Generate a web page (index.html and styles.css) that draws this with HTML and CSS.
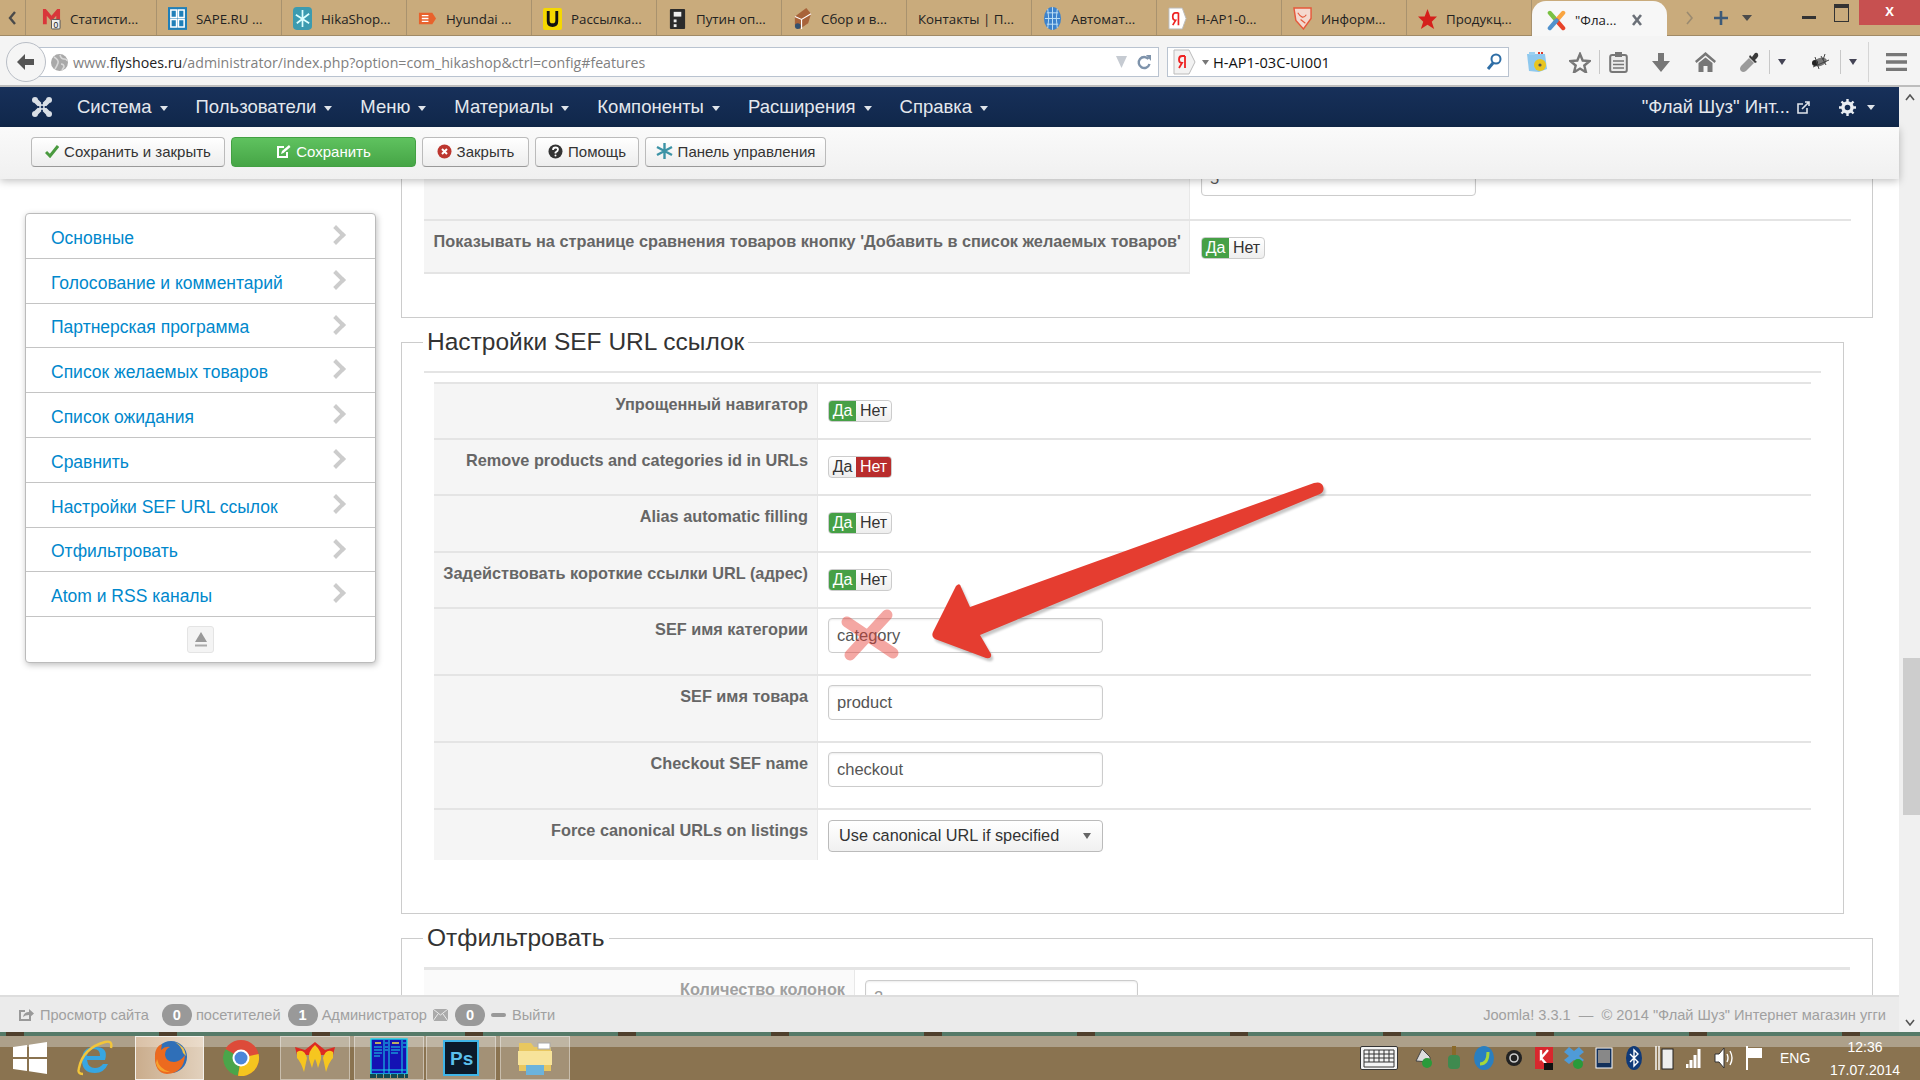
FILE: index.html
```html
<!DOCTYPE html>
<html lang="ru">
<head>
  <meta charset="UTF-8" />
  <title>Настройки HikaShop - Панель управления</title>
  <link rel="stylesheet" href="styles.css">
</head>
<body>
  <div class="tabstrip">
    <div class="tab-scroll">
      <svg width="9" height="14" viewBox="0 0 9 14"><path d="M7 1 2 7l5 6" fill="none" stroke="#4a4a4a" stroke-width="2.4"/></svg>
    </div>
    <div class="tab tab-first">
      <svg class="fav" viewBox="0 0 20 24"><path d="M1 2h3l6 7 6-7h3v14h-4V9l-5 6-5-6v9H1z" fill="#d9363a"/><rect x="10" y="13" width="9" height="10" rx="1" fill="#eee" stroke="#555"/><text x="12" y="22" class="fav-text">0</text></svg>
      <span>Статисти...</span>
    </div>
    <div class="tab">
      <svg class="fav" viewBox="0 0 20 24"><rect width="20" height="24" fill="#1f7fb8"/><path d="M3 3h6v8H3zM11 3h6v8h-6zM3 13h6v8H3zM11 13h6v8h-6z" fill="none" stroke="#fff" stroke-width="1.6"/></svg>
      <span>SAPE.RU ...</span>
    </div>
    <div class="tab">
      <svg class="fav" viewBox="0 0 20 24"><rect width="20" height="24" rx="4" fill="#3c9bb0"/><path d="M10 3v18M3 8l14 9M17 7 4 17" stroke="#dff" stroke-width="1.8"/></svg>
      <span>HikaShop...</span>
    </div>
    <div class="tab">
      <svg class="fav" viewBox="0 0 20 24"><path d="M1 6h14l4 6-4 6H1z" fill="#e8622c"/><path d="M4 9h7M4 12h7M4 15h7" stroke="#fff" stroke-width="1.4"/></svg>
      <span>Hyundai ...</span>
    </div>
    <div class="tab">
      <svg class="fav" viewBox="0 0 20 24"><rect y="1" width="20" height="23" rx="2" fill="#f5d800"/><path d="M4 4h3v10q0 3 3 3t3-3V4h3v11q0 6-6 6t-6-6z" fill="#111"/></svg>
      <span>Рассылка...</span>
    </div>
    <div class="tab">
      <svg class="fav" viewBox="0 0 20 24"><rect x="2" y="2" width="16" height="21" rx="1" fill="#2b2b2b"/><rect x="6" y="5" width="8" height="5" fill="#eee"/><rect x="6" y="13" width="3" height="3" fill="#eee"/><rect x="6" y="18" width="3" height="3" fill="#eee"/></svg>
      <span>Путин оп...</span>
    </div>
    <div class="tab">
      <svg class="fav" viewBox="0 0 20 24"><path d="M2 10 14 1l5 6-3 10-9 6-5-5z" fill="#a8633a"/><path d="M2 10l7 3 10-6M9 13v10" fill="none" stroke="#fff" stroke-width="1.2"/><circle cx="5" cy="20" r="3" fill="#33506e"/></svg>
      <span>Сбор и в...</span>
    </div>
    <div class="tab"><span>Контакты | П...</span></div>
    <div class="tab">
      <svg class="fav" viewBox="0 0 20 24"><ellipse cx="10" cy="12" rx="9" ry="12" fill="#3c82cc"/><path d="M4 6h12M2 12h16M4 18h12M10 0v24M5 2q2 10 0 20M15 2q-2 10 0 20" fill="none" stroke="#bfe0f7" stroke-width="1"/></svg>
      <span>Автомат...</span>
    </div>
    <div class="tab">
      <svg class="fav" viewBox="0 0 20 24"><path d="M1 1h14l4 11-4 11H1z" fill="#fff" stroke="#bbb"/><path d="M11 6H8Q5 6 5 10t3 4l-3 5M11 6v13" fill="none" stroke="#e22" stroke-width="1.8"/></svg>
      <span>Н-АР1-0...</span>
    </div>
    <div class="tab">
      <svg class="fav" viewBox="0 0 20 24"><path d="M1 1h18v11l-8 11-8-9z" fill="#f4d9cf" stroke="#e5583a" stroke-width="1.5"/><path d="M5 6q5 8 9 2M8 13l5 4" fill="none" stroke="#e5583a" stroke-width="1.2"/></svg>
      <span>Информ...</span>
    </div>
    <div class="tab">
      <svg class="fav" viewBox="0 0 20 24"><path d="M10 2l3 8h7l-5.500 5.500L17 23l-7-4.500L3 23l2.500-7.500L0 10h7z" fill="#d5201c"/></svg>
      <span>Продукц...</span>
    </div>
    <div class="tab-active">
      <svg class="fav" viewBox="0 0 20 24"><path d="M3 4l7 8" stroke="#7ac143" stroke-width="4.500" stroke-linecap="round"/><path d="M17 4l-7 8" stroke="#f9a541" stroke-width="4.500" stroke-linecap="round"/><path d="M17 20l-7-8" stroke="#e8432a" stroke-width="4.500" stroke-linecap="round"/><path d="M3 20l7-8" stroke="#5091cd" stroke-width="4.500" stroke-linecap="round"/></svg>
      <span>"Фла...</span>
      <svg class="tab-close" width="10" height="12" viewBox="0 0 10 12"><path d="M1 1l8 10M9 1 1 11" stroke="#6b7078" stroke-width="2.600"/></svg>
    </div>
    <div class="tab-extras">
      <svg width="8" height="14" viewBox="0 0 8 14"><path d="M1 1l5 6-5 6" fill="none" stroke="#9a8a70" stroke-width="1.600"/></svg>
      <svg width="14" height="14" viewBox="0 0 14 14"><path d="M7 0v14M0 7h14" stroke="#3d5a78" stroke-width="2.600"/></svg>
      <svg class="tabs-menu" width="10" height="6" viewBox="0 0 10 6"><path d="M0 0h10L5 6z" fill="#4b4b4b"/></svg>
    </div>
    <div class="window-controls">
      <span class="win-min"></span>
      <span class="win-max"></span>
      <span class="win-close">X</span>
    </div>
  </div>

  <div class="navbar">
    <div class="back-button">
      <svg width="18" height="16" viewBox="0 0 18 16"><path d="M8 0 0 8l8 8V11h9V5H8z" fill="#555"/></svg>
    </div>
    <div class="urlbar">
      <svg width="17" height="17" viewBox="0 0 17 17"><circle cx="8.500" cy="8.500" r="8.500" fill="#a9a9a9"/><path d="M3 3q5 3 4 6t-3 6M9 1q1 4 4 4t3 2M10 10q3 0 3 3l-2 3" fill="none" stroke="#d8d8d8" stroke-width="1.600"/></svg>
      <div class="url-text"><span class="url-dim">www.</span><span class="url-host">flyshoes.ru</span><span class="url-dim">/administrator/index.php?option=com_hikashop&amp;ctrl=config#features</span></div>
      <svg width="11" height="12" viewBox="0 0 11 12"><path d="M0 0h11L5.500 12z" fill="#c6cbd2"/></svg>
      <svg class="url-reload" width="14" height="16" viewBox="0 0 14 16"><path d="M11.500 5A5.500 5.500 0 1 0 12.500 10" fill="none" stroke="#7e93ab" stroke-width="2.400"/><path d="M9 1h5v6z" fill="#7e93ab"/></svg>
    </div>
    <div class="searchbar">
      <svg width="24" height="26" viewBox="0 0 24 26"><path d="M1 1h15l6 12-6 12H1z" fill="#f2f2f2" stroke="#bbb"/><path d="M12 7H9Q6 7 6 10.500T9 14l-3 5M12 7v12" fill="none" stroke="#e22" stroke-width="1.800"/></svg>
      <svg width="7" height="5" viewBox="0 0 7 5"><path d="M0 0h7L3.500 5z" fill="#777"/></svg>
      <div class="search-text">H-AP1-03C-UI001</div>
      <svg width="16" height="18" viewBox="0 0 16 18"><circle cx="10" cy="6" r="4.500" fill="none" stroke="#2e6ea6" stroke-width="2"/><path d="M7 10 2 16" stroke="#2e6ea6" stroke-width="3"/></svg>
    </div>
    <div class="nav-icons">
      <svg class="nav-sync" width="22" height="22" viewBox="0 0 22 22"><path d="M1 3h18l2 15-8 3-10-1z" fill="#8ec8ee"/><path d="M3 1h6v3H3z" fill="#9bd0f0"/><path d="M12 1h2v2h-2zM15 1h2v2h-2z" fill="#d8392b"/><circle cx="14" cy="14" r="6" fill="#e8c520"/><circle cx="14" cy="14" r="1.600" fill="#555"/></svg>
      <svg class="nav-star" width="22" height="21" viewBox="0 0 22 21"><path d="M11 2l2.700 6.500 7 .5-5.400 4.500 1.700 6.800-6-3.700-6 3.700 1.700-6.800L1.300 9l7-.5z" fill="#f6f6f6" stroke="#777" stroke-width="2.400"/></svg>
      <span class="nav-split-star"></span>
      <svg class="nav-clip" width="19" height="22" viewBox="0 0 19 22"><rect x="1.200" y="4" width="16.600" height="17" rx="2" fill="#ececec" stroke="#777" stroke-width="2"/><rect x="6" y="1" width="7" height="5" fill="#777"/><path d="M4 10h11M4 13.500h11M4 17h11" stroke="#777" stroke-width="1.600"/></svg>
      <svg class="nav-down" width="20" height="19" viewBox="0 0 20 19"><path d="M7 0h6v8h6l-9 11L1 8h6z" fill="#777"/></svg>
      <svg class="nav-home" width="21" height="20" viewBox="0 0 21 20"><path d="M10.500 0 0 9l1.500 2 9-7.500 9 7.500L21 9zM10.500 5.500 3.500 11v9h5v-6h4v6h5v-9z" fill="#777"/></svg>
      <svg class="nav-mic" width="20" height="20" viewBox="0 0 20 20"><path d="M1 19q-2-2 0-5l8-8 5 5-8 8q-3 2-5 0z" fill="#9a9a9a"/><path d="M10 3l7 7-2 1-6-6zM12 5l3-4q2-1 3 1t-1 4l-2 2z" fill="#3a3a3a"/></svg>
      <span class="nav-split"></span>
      <svg class="nav-caret" width="8" height="6" viewBox="0 0 8 6"><path d="M0 0h8L4 6z" fill="#445"/></svg>
      <svg class="nav-bug" width="20" height="18" viewBox="0 0 20 18"><ellipse cx="9" cy="9" rx="7" ry="4" transform="rotate(-20 9 9)" fill="#777"/><circle cx="4" cy="10" r="3" fill="#222"/><path d="M4 4l4 12M2 14l16-7M10 3l5 9M14 1l-2 6" stroke="#444" stroke-width="1"/></svg>
      <span class="nav-split"></span>
      <svg class="nav-caret" width="8" height="6" viewBox="0 0 8 6"><path d="M0 0h8L4 6z" fill="#445"/></svg>
      <span class="nav-rule"></span>
      <svg class="nav-menu" width="21" height="18" viewBox="0 0 21 18"><path d="M0 1.500h21M0 9h21M0 16.500h21" stroke="#777" stroke-width="3.400"/></svg>
    </div>
  </div>

  <div class="window">
    <div class="admin">
      <div class="topmenu">
        <svg class="joomla" width="22" height="22" viewBox="0 0 22 22"><path d="M5 5l12 12M17 5 5 17" stroke="#d9dfe6" stroke-width="5"/><circle cx="4" cy="4" r="3" fill="#d9dfe6"/><circle cx="18" cy="4" r="3" fill="#d9dfe6"/><circle cx="4" cy="18" r="3" fill="#d9dfe6"/><circle cx="18" cy="18" r="3" fill="#d9dfe6"/><path d="M11 6.500v1.800M11 13.700v1.800M6.500 11h1.800M13.700 11h1.800" stroke="#17305a" stroke-width="1.800"/><circle cx="11" cy="11" r="1.300" fill="#17305a"/></svg>
        <a class="menu-item">Система</a>
        <a class="menu-item">Пользователи</a>
        <a class="menu-item">Меню</a>
        <a class="menu-item">Материалы</a>
        <a class="menu-item">Компоненты</a>
        <a class="menu-item">Расширения</a>
        <a class="menu-item">Справка</a>
        <div class="menu-right">
          <span class="site-name">"Флай Шуз" Инт...</span>
          <svg width="13" height="13" viewBox="0 0 13 13"><path d="M10 7v5H1V3h5" fill="none" stroke="#dfe4ea" stroke-width="1.600"/><path d="M5 8l7-7M8 1h4v4" fill="none" stroke="#dfe4ea" stroke-width="1.600"/></svg>
          <svg class="gear" width="17" height="17" viewBox="0 0 17 17"><circle cx="8.500" cy="8.500" r="4.500" fill="none" stroke="#e9edf2" stroke-width="3.400"/><path d="M8.500 0v4M8.500 13v4M0 8.500h4M13 8.500h4M2.500 2.500l3 3M11.500 11.500l3 3M14.500 2.500l-3 3M5.500 11.500l-3 3" stroke="#e9edf2" stroke-width="2.400"/></svg>
          <i class="caret"></i>
        </div>
      </div>

      <div class="toolbar">
        <button class="btn btn-save-close">
          <svg width="14" height="13" viewBox="0 0 14 13"><path d="M1 7l4 4 8-10" fill="none" stroke="#4a9a3f" stroke-width="3"/></svg>
          Сохранить и закрыть
        </button>
        <button class="btn btn-green">
          <svg width="15" height="15" viewBox="0 0 15 15"><path d="M11 8v5H2V3h6" fill="none" stroke="#fff" stroke-width="2"/><path d="M5 10l1-3 7-6 1.500 2-7 6z" fill="#fff"/></svg>
          Сохранить
        </button>
        <button class="btn btn-close">
          <svg width="15" height="15" viewBox="0 0 15 15"><circle cx="7.500" cy="7.500" r="7" fill="#bd362f"/><path d="M5 5l5 5M10 5l-5 5" stroke="#fff" stroke-width="2"/></svg>
          Закрыть
        </button>
        <button class="btn btn-help">
          <svg width="15" height="15" viewBox="0 0 15 15"><circle cx="7.500" cy="7.500" r="7" fill="#333"/><path d="M5 6q0-2.500 2.500-2.500T10 5.500Q10 7 7.500 8.500v1" fill="none" stroke="#fff" stroke-width="1.800"/><circle cx="7.500" cy="11.500" r="1" fill="#fff"/></svg>
          Помощь
        </button>
        <button class="btn btn-panel">
          <svg width="17" height="18" viewBox="0 0 17 18"><path d="M8.500 1v16M1 5l15 8M16 5 1 13" stroke="#3c93a6" stroke-width="2.400"/></svg>
          Панель управления
        </button>
      </div>

      <div class="main">
        <div class="sidebar">
          <a class="side-link">Основные</a>
          <a class="side-link">Голосование и комментарий</a>
          <a class="side-link">Партнерская программа</a>
          <a class="side-link">Список желаемых товаров</a>
          <a class="side-link">Список ожидания</a>
          <a class="side-link">Сравнить</a>
          <a class="side-link">Настройки SEF URL ссылок</a>
          <a class="side-link">Отфильтровать</a>
          <a class="side-link">Atom и RSS каналы</a>
          <div class="side-foot">
            <span class="side-top">
              <svg width="14" height="16" viewBox="0 0 14 16"><path d="M7 0l6 10H1z" fill="#999"/><path d="M1 13.500h12" stroke="#aaa" stroke-width="2"/></svg>
            </span>
          </div>
        </div>

        <div class="content">
          <div class="panel">
            <div class="cfg-row row-cut">
              <div class="cfg-label wide">Показывать на странице сравнения товаров кнопку 'Добавить в корзину'</div>
              <div class="cfg-value wide"><input class="text-input" value="5"></div>
            </div>
            <div class="cfg-row row-compare">
              <div class="cfg-label wide">Показывать на странице сравнения товаров кнопку 'Добавить в список желаемых товаров'</div>
              <div class="cfg-value wide"><span class="toggle"><b class="yes on">Да</b><b class="no">Нет</b></span></div>
            </div>
          </div>

          <fieldset class="section section-sef">
            <legend>Настройки SEF URL ссылок</legend>
            <div class="legend-rule"></div>
            <div class="cfg-table">
              <div class="cfg-row row-toggle">
                <div class="cfg-label">Упрощенный навигатор</div>
                <div class="cfg-value"><span class="toggle"><b class="yes on">Да</b><b class="no">Нет</b></span></div>
              </div>
              <div class="cfg-row row-toggle">
                <div class="cfg-label">Remove products and categories id in URLs</div>
                <div class="cfg-value"><span class="toggle"><b class="yes">Да</b><b class="no on">Нет</b></span></div>
              </div>
              <div class="cfg-row row-toggle">
                <div class="cfg-label">Alias automatic filling</div>
                <div class="cfg-value"><span class="toggle"><b class="yes on">Да</b><b class="no">Нет</b></span></div>
              </div>
              <div class="cfg-row row-toggle">
                <div class="cfg-label">Задействовать короткие ссылки URL (адрес)</div>
                <div class="cfg-value"><span class="toggle"><b class="yes on">Да</b><b class="no">Нет</b></span></div>
              </div>
              <div class="cfg-row row-input">
                <div class="cfg-label">SEF имя категории</div>
                <div class="cfg-value"><input class="text-input" value="category"></div>
              </div>
              <div class="cfg-row row-input">
                <div class="cfg-label">SEF имя товара</div>
                <div class="cfg-value"><input class="text-input" value="product"></div>
              </div>
              <div class="cfg-row row-input">
                <div class="cfg-label">Checkout SEF name</div>
                <div class="cfg-value"><input class="text-input" value="checkout"></div>
              </div>
              <div class="cfg-row row-select">
                <div class="cfg-label">Force canonical URLs on listings</div>
                <div class="cfg-value">
                  <div class="select-box">Use canonical URL if specified<i class="select-arrow"></i></div>
                </div>
              </div>
            </div>
          </fieldset>

          <fieldset class="section section-filter">
            <legend>Отфильтровать</legend>
            <div class="legend-rule"></div>
            <div class="cfg-row row-columns">
              <div class="cfg-label columns-label">Количество колонок</div>
              <div class="cfg-value columns-value"><input class="text-input" value="2"></div>
            </div>
          </fieldset>
        </div>

        <svg class="markup" width="500" height="200" viewBox="0 0 500 200">
          <path class="arrow" d="M146 126 490 2q7-2 9 3t-3 8L156 154l11 19q1 5-5 4l-51-19q-4-2-2-7l23-46q4-4 5 1z"/>
          <path class="cross" d="M23 141 69 172M63 134 26 174"/>
        </svg>
      </div>

      <div class="statusbar">
        <svg width="15" height="13" viewBox="0 0 15 13"><path d="M11 8v4H1V3h5" fill="none" stroke="#999" stroke-width="2"/><path d="M4 9q1-5 6-5V1l5 4.500L10 10V7q-4 0-6 2z" fill="#999"/></svg>
        <span class="status-text status-view">Просмотр сайта</span>
        <span class="badge">0</span>
        <span class="status-text">посетителей</span>
        <span class="badge badge-admin">1</span>
        <span class="status-text">Администратор</span>
        <svg class="status-mail" width="15" height="12" viewBox="0 0 15 12"><rect width="15" height="12" fill="#aaa"/><path d="M0 0l7.500 6L15 0M0 12l5-7M15 12l-5-7" fill="none" stroke="#eaeaea"/></svg>
        <span class="badge">0</span>
        <span class="status-minus"></span>
        <span class="status-text">Выйти</span>
        <span class="status-right">Joomla! 3.3.1 &nbsp;— &nbsp;© 2014 "Флай Шуз" Интернет магазин угги</span>
      </div>
    </div>

    <div class="scrollbar">
      <svg class="scroll-up" width="10" height="7" viewBox="0 0 10 7"><path d="M1 6l4-5 4 5" fill="none" stroke="#555" stroke-width="1.600"/></svg>
      <div class="scroll-thumb"></div>
      <svg class="scroll-down" width="10" height="7" viewBox="0 0 10 7"><path d="M1 1l4 5 4-5" fill="none" stroke="#555" stroke-width="1.600"/></svg>
    </div>
  </div>

  <div class="taskbar">
    <div class="task-strip"></div>
    <div class="task-row">
      <div class="task-icon task-start">
        <svg width="34" height="34" viewBox="0 0 34 34"><path d="M0 6 14 4v12H0zM16 3.700 34 1v15H16zM0 18h14v12L0 28zM16 18h18v15l-18-2.700z" fill="#fff"/></svg>
      </div>
      <div class="task-icon">
        <svg width="40" height="40" viewBox="0 0 40 40"><path d="M30 22H12q1 8 8 8 5 0 8-4h5q-4 9-13 9-13 0-13-13t13-13q14 0 10 13zM12 18h13q0-7-6-7t-7 7z" fill="#37a6e2"/><path d="M4 30Q8 10 30 4q8-2 6 6M4 30q-2 6 4 6" fill="none" stroke="#f2c53a" stroke-width="2.400"/></svg>
      </div>
      <div class="task-icon task-open task-hot">
        <svg width="38" height="38" viewBox="0 0 38 38"><circle cx="20" cy="18" r="16" fill="#2f6fb8"/><path d="M24 3q10 4 11 14l-3-3q-1-6-8-11z" fill="#f2c14a"/><path d="M4 16Q4 8 11 5l-1 6q4-4 9-3-5 2-5 8 1 7 9 7 6 0 11-7-1 18-18 19Q3 34 4 16z" fill="#ec6a1f"/><path d="M6 20q2 10 13 13-12 1-14-9z" fill="#f7a12c"/></svg>
      </div>
      <div class="task-icon">
        <svg width="38" height="38" viewBox="0 0 38 38"><circle cx="19" cy="19" r="18" fill="#dd4b39"/><path d="M19 19 3.400 10A18 18 0 0 0 16 36.800z" fill="#4aa54a"/><path d="M19 19 36.600 15A18 18 0 0 1 16 36.800z" fill="#f4c51f"/><circle cx="19" cy="19" r="8.500" fill="#fff"/><circle cx="19" cy="19" r="6.500" fill="#4a86d8"/></svg>
      </div>
      <div class="task-icon task-open task-msn">
        <svg width="42" height="34" viewBox="0 0 42 34"><path d="M1 6l10 3 10-8 10 8 10-3-2 8H3z" fill="#dd2a22"/><path d="M3 11q7-4 10 6l-3 14q-3-10-7-14zM39 11q-7-4-10 6l3 14q3-10 7-14zM21 4q7 6 6 14l-3 9q-2-8-3-9-1 1-3 9l-3-9q-1-8 6-14z" fill="#f6c61f"/></svg>
      </div>
      <div class="task-icon task-open">
        <svg width="38" height="40" viewBox="0 0 38 40"><rect x="1" y="1" width="36" height="35" fill="#1411b4" stroke="#19d6e8" stroke-width="1.400"/><path d="M14 2v33M19 2v33M32 2v33M2 32h34" stroke="#19d6e8" stroke-width="1"/><path d="M5 5h6M22 5h7" stroke="#f0e04a" stroke-width="1.400"/><path d="M4 9h8M4 12h8M4 15h8M4 18h6M21 9h9M21 12h9M21 15h7M15 5h3M15 9h3M15 12h3M33 5h3M33 9h3" stroke="#19d6e8" stroke-width="1.200"/><path d="M0 38h38" stroke="#124a50" stroke-width="4" stroke-dasharray="6 1"/></svg>
      </div>
      <div class="task-icon task-open">
        <svg width="36" height="36" viewBox="0 0 36 36"><rect x="1" y="1" width="34" height="34" fill="#0b1a2b" stroke="#3fb5e8" stroke-width="2"/><text x="7" y="25" class="ps-text">Ps</text></svg>
      </div>
      <div class="task-icon task-open task-last">
        <svg width="38" height="38" viewBox="0 0 38 38"><path d="M3 4h12l3 4h17v24H3z" fill="#e9c75f"/><path d="M2 12h34v14H2z" fill="#f7e39a"/><path d="M10 36V26h18v10z" fill="#6bb3dc"/><rect x="22" y="4" width="12" height="6" fill="#fff" stroke="#aaa"/></svg>
      </div>
      <div class="tray">
        <div class="tray-keyboard">
          <svg width="32" height="19" viewBox="0 0 32 19"><path d="M1 1h30v17H1zM1 5h30M1 9h30M1 13h30M6 1v12M11 1v12M16 1v12M21 1v12M26 1v12" fill="none" stroke="#333"/></svg>
        </div>
        <div class="tray-icons">
          <svg width="20" height="22" viewBox="0 0 20 22"><path d="M2 14 8 2l8 8v5z" fill="#ddd" stroke="#444"/><circle cx="13" cy="16" r="5" fill="#2a9a3a"/></svg>
          <svg width="14" height="24" viewBox="0 0 14 24"><rect x="5" width="4" height="9" fill="#8a6a2a"/><rect x="1" y="9" width="12" height="14" rx="4" fill="#3f8a4f"/></svg>
          <svg width="20" height="24" viewBox="0 0 20 24"><ellipse cx="10" cy="12" rx="10" ry="12" fill="#2a7fc0"/><path d="M6 18q8 0 8-12" fill="none" stroke="#a5d83a" stroke-width="3"/></svg>
          <svg width="18" height="18" viewBox="0 0 18 18"><circle cx="9" cy="9" r="8" fill="#222"/><circle cx="9" cy="9" r="4" fill="none" stroke="#ccc" stroke-width="1.600"/></svg>
          <svg width="18" height="24" viewBox="0 0 18 24"><rect y="1" width="18" height="22" fill="#d8272d"/><path d="M6 4v8l7-8M6 12l7 8" fill="none" stroke="#fff" stroke-width="2.400"/><rect x="9" y="17" width="9" height="7" fill="#111"/></svg>
          <svg width="20" height="24" viewBox="0 0 20 24"><path d="M5 1l5 4 5-4 5 5-5 4 5 4-5 4-5-4-5 4-5-4 5-4-5-4z" fill="#4f9bd8"/><circle cx="14" cy="18" r="5" fill="#2a9a3a"/></svg>
          <svg width="18" height="22" viewBox="0 0 18 22"><rect x="1" y="1" width="16" height="20" fill="#12305a" stroke="#fff"/><rect x="3" y="3" width="12" height="13" fill="#888"/></svg>
          <svg width="16" height="24" viewBox="0 0 16 24"><ellipse cx="8" cy="12" rx="8" ry="12" fill="#103a78"/><path d="M4 8l8 8-4 4V4l4 4-8 8" fill="none" stroke="#fff" stroke-width="1.400"/></svg>
          <svg width="20" height="24" viewBox="0 0 20 24"><path d="M2 0v24M5 0v24" stroke="#fff" stroke-width="1.400"/><rect x="8" y="3" width="11" height="20" fill="#eee" stroke="#222"/></svg>
          <svg width="16" height="20" viewBox="0 0 16 20"><path d="M1 20v-4M5 20v-8M9 20V7M13 20V1" stroke="#fff" stroke-width="3"/></svg>
          <svg width="20" height="22" viewBox="0 0 20 22"><path d="M1 7h4l5-6v20l-5-6H1z" fill="#fff" stroke="#333"/><path d="M13 7q2 4 0 8M16 4q4 7 0 14" fill="none" stroke="#fff" stroke-width="1.400"/></svg>
          <svg width="16" height="24" viewBox="0 0 16 24"><path d="M1 0v24" stroke="#fff" stroke-width="2"/><path d="M2 2h14v10H2z" fill="#fff"/></svg>
        </div>
        <span class="tray-lang">ENG</span>
        <div class="tray-clock">
          <span>12:36</span>
          <span>17.07.2014</span>
        </div>
      </div>
    </div>
  </div>
</body>
</html>
```

FILE: styles.css
```css
* {
  box-sizing: border-box;
}

body {
  margin: 0;
  height: 100vh;
  overflow: hidden;
  display: flex;
  flex-direction: column;
  font-family: "Liberation Sans", Arial, sans-serif;
  background: #fff;
}

/* browser tabs */
.tabstrip {
  height: 36px;
  display: flex;
  background: #c9ab7c;
  border-bottom: 1px solid #a08a66;
  font-family: "Open Sans", sans-serif;
  font-size: 13.300px;
  color: #222;
}

.tab-scroll {
  width: 26px;
  display: flex;
  align-items: center;
  justify-content: center;
  border-right: 1px solid #a8926e;
}

.tab {
  width: 125px;
  padding: 2px 0 0 11px;
  display: flex;
  align-items: center;
  gap: 9px;
  border-right: 1px solid #a8926e;
  white-space: nowrap;
}

.tab-first {
  width: 131px;
  padding-left: 16px;
}

.fav {
  width: 19px;
  height: 23px;
  flex: none;
}

.fav-text {
  font-size: 9px;
  font-family: "Liberation Sans", sans-serif;
  fill: #222;
}

.tab-active {
  width: 135px;
  height: 36px;
  padding: 2px 0 0 15px;
  margin-top: 1px;
  display: flex;
  align-items: center;
  gap: 9px;
  background: #f7f7f7;
  border-radius: 14px 14px 0 0;
  white-space: nowrap;
}

.tab-close {
  margin-left: 7px;
}

.tab-extras {
  display: flex;
  align-items: center;
  padding-left: 19px;
  gap: 20px;
}

.tabs-menu {
  margin-left: -6px;
}

.window-controls {
  margin-left: auto;
  display: flex;
  align-items: flex-start;
}

.win-min {
  width: 14px;
  height: 3px;
  margin-top: 16px;
  background: #333;
}

.win-max {
  width: 15px;
  height: 18px;
  margin: 4px 10px 0 18px;
  border: 1px solid #333;
  border-top-width: 4px;
}

.win-close {
  width: 61px;
  height: 25px;
  background: #c75050;
  color: #fff;
  font-size: 13px;
  font-weight: bold;
  text-align: center;
  line-height: 23px;
}

/* address bar */
.navbar {
  height: 51px;
  padding-top: 3px;
  display: flex;
  align-items: center;
  background: #f4f4f4;
  border-bottom: 2px solid #bdbdbd;
  font-family: "Open Sans", sans-serif;
  position: relative;
}

.back-button {
  width: 40px;
  height: 40px;
  margin-left: 6px;
  display: flex;
  align-items: center;
  justify-content: center;
  border: 1px solid #b9bec6;
  border-radius: 50%;
  background: #f5f5f5;
  z-index: 1;
}

.urlbar {
  width: 1133px;
  height: 30px;
  margin-left: -20px;
  padding: 0 7px 0 24px;
  display: flex;
  align-items: center;
  background: #fff;
  border: 1px solid #b9c3d0;
}

.url-text {
  flex: 1;
  margin-left: 5px;
  font-size: 14.200px;
  color: #777;
}

.url-host {
  color: #222;
}

.url-dim {
  color: #808080;
}

.url-reload {
  margin-left: 10px;
}

.searchbar {
  width: 342px;
  height: 30px;
  margin-left: 8px;
  padding: 0 6px 0 5px;
  display: flex;
  align-items: center;
  gap: 5px;
  background: #fff;
  border: 1px solid #b9c3d0;
}

.search-text {
  flex: 1;
  margin-left: -1px;
  font-size: 14.600px;
  color: #111;
}

.nav-icons {
  flex: 1;
  height: 40px;
  display: flex;
  align-items: center;
}

.nav-sync {
  margin-left: 17px;
}

.nav-star {
  margin-left: 21px;
}

.nav-split-star {
  width: 1px;
  height: 24px;
  margin-left: 8px;
  background: #c8c8c8;
}

.nav-clip {
  margin-left: 9px;
}

.nav-down {
  margin-left: 23px;
}

.nav-home {
  margin-left: 24px;
}

.nav-mic {
  margin-left: 24px;
}

.nav-split {
  width: 1px;
  height: 24px;
  margin-left: 9px;
  background: #c8c8c8;
}

.nav-caret {
  margin-left: 8px;
}

.nav-bug {
  margin-left: 25px;
}

.nav-rule {
  width: 1px;
  height: 40px;
  margin-left: 11px;
  background: #d5d5d5;
}

.nav-menu {
  margin-left: 17px;
}

/* page and scrollbar */
.window {
  flex: 1;
  min-height: 0;
  display: flex;
}

.admin {
  flex: 1;
  min-width: 0;
  display: flex;
  flex-direction: column;
}

.scrollbar {
  width: 21px;
  display: flex;
  flex-direction: column;
  align-items: center;
  background: #f0f0f0;
  position: relative;
}

.scroll-up {
  margin-top: 7px;
}

.scroll-thumb {
  width: 17px;
  height: 157px;
  margin: 557px 0 0 4px;
  background: #cdcdcd;
}

.scroll-down {
  margin-top: auto;
  margin-bottom: 6px;
}

/* joomla top menu */
.topmenu {
  height: 40px;
  display: flex;
  align-items: center;
  padding-left: 31px;
  background: linear-gradient(#17305a, #10274a);
  color: #e4e8ee;
  font-size: 18.500px;
}

.joomla {
  margin-right: 24px;
}

.menu-item {
  margin-right: 28px;
  white-space: nowrap;
}

.menu-item::after,
.caret {
  content: "";
  display: inline-block;
  width: 0;
  height: 0;
  margin-left: 8px;
  vertical-align: 2px;
  border-top: 5px solid #dfe4ea;
  border-left: 4.500px solid transparent;
  border-right: 4.500px solid transparent;
}

.menu-right {
  margin-left: auto;
  padding-right: 24px;
  display: flex;
  align-items: center;
}

.site-name {
  margin-right: 7px;
}

.gear {
  margin-left: 29px;
}

.caret {
  margin-left: 11px;
  vertical-align: 0;
}

/* toolbar */
.toolbar {
  height: 52px;
  padding: 10px 0 0 31px;
  display: flex;
  gap: 6px;
  align-items: flex-start;
  background: linear-gradient(#fafafa, #f0f0f0);
  box-shadow: 0 2px 8px rgba(0, 0, 0, 0.25);
  position: relative;
  z-index: 2;
}

.btn {
  height: 30px;
  padding: 0 0 2px;
  display: flex;
  align-items: center;
  justify-content: center;
  gap: 5px;
  background: linear-gradient(#fff, #ededed);
  border: 1px solid #bbb;
  border-bottom-color: #999;
  border-radius: 4px;
  font-family: "Liberation Sans", Arial, sans-serif;
  font-size: 15px;
  color: #333;
}

.btn-save-close {
  width: 194px;
}

.btn-green {
  width: 185px;
  background: linear-gradient(#5fc25f, #46a546);
  border-color: #43a043;
  color: #fff;
}

.btn-close {
  width: 107px;
}

.btn-help {
  width: 104px;
}

.btn-panel {
  width: 181px;
}

/* main area */
.main {
  flex: 1;
  min-height: 0;
  display: flex;
  align-items: flex-start;
  overflow: hidden;
  position: relative;
}

.sidebar {
  width: 351px;
  margin: 34px 25px 0 25px;
  flex: none;
  background: #fff;
  border: 1px solid #bbb;
  border-radius: 4px;
  box-shadow: 1px 2px 6px rgba(0, 0, 0, 0.25);
}

.side-link {
  height: 44.800px;
  padding: 5px 0 0 25px;
  display: flex;
  align-items: center;
  border-bottom: 1px solid #c4c4c4;
  font-size: 17.500px;
  color: #0088cc;
  position: relative;
}

.side-link::after {
  content: "";
  position: absolute;
  right: 32px;
  top: 14px;
  width: 10px;
  height: 10px;
  border-top: 4px solid #ccc;
  border-right: 4px solid #ccc;
  transform: rotate(45deg);
}

.side-foot {
  height: 45px;
  display: flex;
  align-items: center;
  justify-content: center;
}

.side-top {
  width: 27px;
  height: 27px;
  display: flex;
  align-items: center;
  justify-content: center;
  background: #f4f4f4;
  border: 1px solid #e4e4e4;
  border-radius: 3px;
}

.content {
  width: 1472px;
  flex: none;
  margin-top: -40px;
}

.panel {
  height: 179px;
  padding: 0 21px 0 22px;
  border: 1px solid #ccc;
  border-top: none;
}

.cfg-row {
  display: flex;
  border-top: 2px solid #e4e4e4;
}

.cfg-label {
  width: 384px;
  padding: 10px 9px 0 8px;
  flex: none;
  background: #f5f5f5;
  border-right: 1px solid #e8e8e8;
  font-size: 16.300px;
  font-weight: bold;
  line-height: 20px;
  color: #666;
  text-align: right;
}

.cfg-label.wide {
  width: 766px;
  padding: 10px 8px 0 8px;
  white-space: nowrap;
}

.cfg-value {
  flex: 1;
  padding: 16px 0 0 10px;
}

.cfg-value.wide {
  padding-left: 11px;
}

.row-cut {
  height: 80px;
  border-top: none;
}

.row-cut .cfg-label {
  padding-top: 21px;
}

.row-cut .cfg-value {
  padding-top: 0;
}

.row-cut .text-input {
  height: 57px;
  padding-top: 22px;
}

.row-compare {
  height: 55px;
}

.row-compare .cfg-label {
  border-bottom: 2px solid #e4e4e4;
}

.section {
  margin: 9px 0 0;
  padding: 0 22px;
  border: 1px solid #ccc;
  min-width: 0;
}

.section legend {
  margin-left: -1px;
  padding: 0 4px;
  font-size: 24.500px;
  line-height: 30px;
  color: #333;
}

.section-sef {
  width: 1443px;
  height: 587px;
}

.section-filter {
  margin-top: 9px;
  height: 200px;
}

.legend-rule {
  margin-top: 14px;
  border-top: 2px solid #e4e4e4;
}

.cfg-table {
  margin: 9px 10px 0;
}

.cfg-table .cfg-row:first-child {
  height: 56px;
}

.row-toggle {
  height: 56.250px;
}

.row-input {
  height: 67px;
}

.row-input .cfg-value {
  padding-top: 9px;
}

.row-select {
  height: 52px;
}

.row-select .cfg-value {
  padding-top: 10px;
}

.toggle {
  display: inline-flex;
  height: 22px;
  width: 64px;
  background: linear-gradient(#fff, #eee);
  border: 1px solid #ccc;
  border-radius: 4px;
  overflow: hidden;
  font-size: 16px;
  line-height: 20px;
  color: #333;
}

.toggle b {
  font-weight: normal;
  text-align: center;
}

.toggle .yes {
  width: 27px;
}

.toggle .no {
  flex: 1;
}

.toggle .yes.on {
  background: #46a046;
  color: #fff;
}

.toggle .no.on {
  background: #b82c2c;
  color: #fff;
}

.text-input {
  display: block;
  width: 275px;
  height: 35px;
  padding: 0 8px;
  background: #fff;
  border: 1px solid #ccc;
  border-radius: 4px;
  box-shadow: inset 0 1px 2px rgba(0, 0, 0, 0.08);
  font-family: "Liberation Sans", Arial, sans-serif;
  font-size: 16.500px;
  color: #555;
}

.select-box {
  width: 275px;
  height: 32px;
  padding-left: 10px;
  display: flex;
  align-items: center;
  background: linear-gradient(#fff, #f0f0f0);
  border: 1px solid #bbb;
  border-radius: 4px;
  font-size: 16.300px;
  color: #333;
}

.select-arrow {
  margin-left: auto;
  margin-right: 11px;
  border-top: 6px solid #666;
  border-left: 4px solid transparent;
  border-right: 4px solid transparent;
}

.row-columns {
  height: 60px;
  border-top: 1px solid #e4e4e4;
}

.columns-label {
  width: 431px;
  padding-top: 9px;
  background: #fafafa;
  color: #a0a0a0;
}

.columns-value {
  padding-top: 10px;
}

.columns-value .text-input {
  width: 273px;
  color: #999;
}

/* red arrow painted on the screenshot */
.markup {
  position: absolute;
  left: 824px;
  top: 302px;
  overflow: visible;
}

.arrow {
  fill: #e53d30;
  filter: drop-shadow(2px 3px 1px rgba(0, 0, 0, 0.22));
}

.cross {
  fill: none;
  stroke: rgba(230, 60, 50, 0.45);
  stroke-width: 11;
  stroke-linecap: round;
}

/* joomla status bar */
.statusbar {
  height: 37px;
  padding: 0 13px 0 19px;
  display: flex;
  align-items: center;
  background: #ebebeb;
  border-top: 2px solid #ddd;
  font-size: 14.600px;
  color: #a0a0a0;
  position: relative;
  z-index: 1;
}

.status-text {
  white-space: nowrap;
}

.status-view {
  margin-left: 6px;
  margin-right: 13px;
}

.badge {
  width: 30px;
  height: 22px;
  margin-right: 4px;
  background: #999;
  border-radius: 11px;
  color: #fff;
  font-weight: bold;
  text-align: center;
  line-height: 22px;
}

.badge-admin {
  margin-left: 7px;
}

.status-mail {
  margin: 0 7px 0 6px;
}

.status-minus {
  width: 15px;
  height: 4px;
  margin: 0 6px 0 2px;
  background: #999;
  border-radius: 2px;
}

.status-right {
  margin-left: auto;
  white-space: nowrap;
}

/* windows taskbar */
.taskbar {
  height: 48px;
  background: linear-gradient(#ada08a 0 15px, #8a7350 15px);
}

.task-strip {
  height: 4px;
  background: linear-gradient(90deg, #4f3f2c 0 18px, #557a68 18px) 6px 0 / 153px 100%;
}

.task-row {
  height: 44px;
  display: flex;
  align-items: center;
}

.task-icon {
  width: 60px;
  height: 44px;
  display: flex;
  align-items: center;
  justify-content: center;
  flex: none;
}

.task-start {
  margin-right: 5px;
}

.task-open {
  width: 70px;
  margin-right: 1px;
  margin-left: 1px;
  background: rgba(255, 255, 255, 0.22);
  border: 1px solid rgba(255, 255, 255, 0.4);
}

.task-hot {
  width: 69px;
  margin: 0 7px 0 10px;
  background: linear-gradient(90deg, rgba(255, 220, 190, 0.55), rgba(255, 240, 225, 0.75));
  border-color: #f4f0ea;
}

.task-msn {
  margin-left: 9px;
  margin-right: 3px;
}

.task-last {
  margin-left: 3px;
}

.ps-text {
  font-family: "Liberation Sans", sans-serif;
  font-size: 19px;
  font-weight: bold;
  fill: #5cc0ee;
}

.tray {
  margin-left: auto;
  display: flex;
  align-items: center;
  padding-right: 20px;
  color: #fff;
}

.tray-keyboard {
  width: 38px;
  height: 24px;
  margin-right: 11px;
  display: flex;
  align-items: center;
  justify-content: center;
  background: #f4f4f4;
  border: 1px solid #333;
  border-radius: 2px;
}

.tray-icons {
  display: grid;
  grid-template-columns: repeat(12, 30px);
  justify-items: center;
  align-items: center;
}

.tray-lang {
  margin-left: 11px;
  width: 50px;
  font-size: 14px;
}

.tray-clock {
  width: 70px;
  display: flex;
  flex-direction: column;
  align-items: center;
  gap: 7px;
  font-size: 14px;
}
```
